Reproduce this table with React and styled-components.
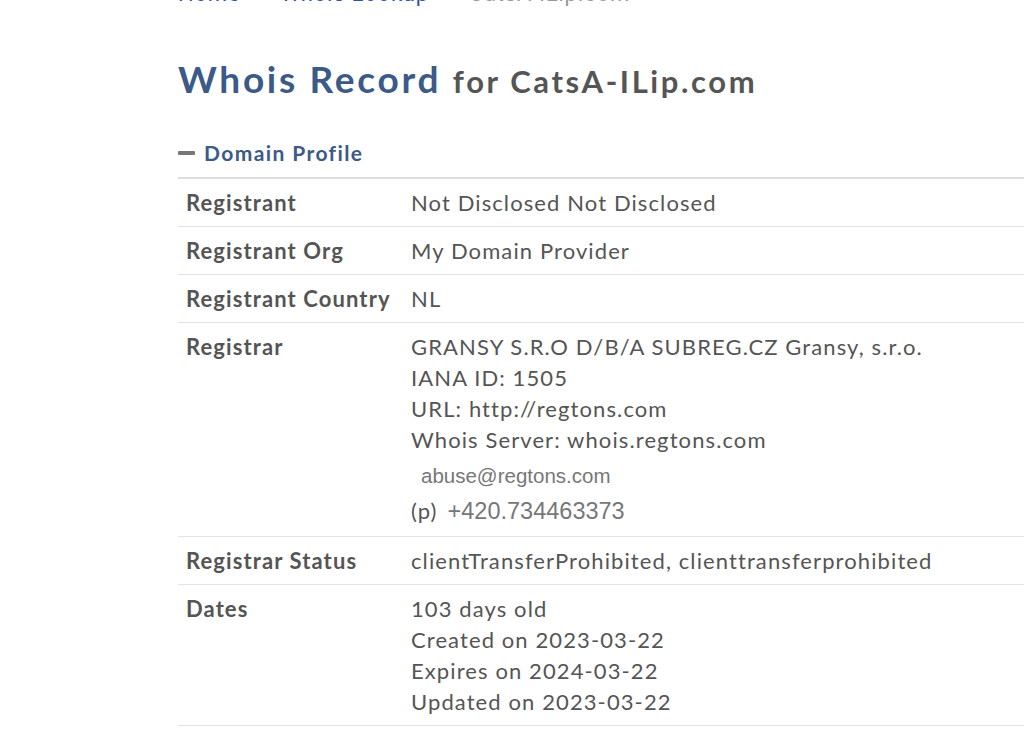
import styled, { createGlobalStyle } from "styled-components";

const GlobalStyle = createGlobalStyle`
  html, body {
    margin: 0;
    padding: 0;
    background: #fff;
    overflow: hidden;
  }
  body {
    font-family: Lato, "Open Sans", sans-serif;
    color: #555;
  }
`;

const rows = [
  { label: "Registrant", lines: ["Not Disclosed Not Disclosed"] },
  { label: "Registrant Org", lines: ["My Domain Provider"] },
  { label: "Registrant Country", lines: ["NL"] },
  {
    label: "Registrar",
    lines: [
      "GRANSY S.R.O D/B/A SUBREG.CZ Gransy, s.r.o.",
      "IANA ID: 1505",
      "URL: http://regtons.com",
      "Whois Server: whois.regtons.com",
    ],
    contact: { email: "abuse@regtons.com", phone: "+420.734463373" },
  },
  {
    label: "Registrar Status",
    lines: ["clientTransferProhibited, clienttransferprohibited"],
  },
  {
    label: "Dates",
    lines: [
      "103 days old",
      "Created on 2023-03-22",
      "Expires on 2024-03-22",
      "Updated on 2023-03-22",
    ],
  },
];

export default function App() {
  return (
    <Page>
      <GlobalStyle />
      <Crumbs>
        <CrumbLink>Home</CrumbLink>
        <Sep>»</Sep>
        <CrumbLink>Whois Lookup</CrumbLink>
        <Sep>»</Sep>
        <CrumbCurrent>CatsA-ILip.com</CrumbCurrent>
      </Crumbs>
      <Title>
        Whois Record <small>for CatsA-ILip.com</small>
      </Title>
      <SectionToggle>
        <Minus />
        Domain Profile
      </SectionToggle>
      <Table>
        <tbody>
          {rows.map((row) => (
            <Row key={row.label}>
              <Label>{row.label}</Label>
              <Value>
                {row.lines.map((l) => (
                  <div key={l}>{l}</div>
                ))}
                {row.contact && (
                  <>
                    <Email>{row.contact.email}</Email>
                    <PhoneLine>
                      (p)<Phone>{row.contact.phone}</Phone>
                    </PhoneLine>
                  </>
                )}
              </Value>
            </Row>
          ))}
        </tbody>
      </Table>
    </Page>
  );
}

const Page = styled.div`
  padding-left: 178px;
  width: 900px;
`;

const Crumbs = styled.div`
  display: flex;
  align-items: baseline;
  gap: 14px;
  margin-top: -20px;
  font-family: Roboto, "Liberation Sans", sans-serif;
  font-size: 22px;
  line-height: 28px;
  letter-spacing: 0.8px;
`;

const CrumbLink = styled.span`
  color: #2f4fa8;
`;

const Sep = styled.span`
  color: #999;
  font-size: 14px;
  width: 12px;
  text-align: center;
`;

const CrumbCurrent = styled.span`
  color: #999;
`;

const Title = styled.h1`
  margin: 46px 0 0;
  font-size: 37px;
  line-height: 46px;
  font-weight: 700;
  letter-spacing: 2.7px;
  color: #3c5a87;
  small {
    font-size: 31px;
    letter-spacing: 2.6px;
    color: #555;
    font-weight: 700;
  }
`;

const SectionToggle = styled.div`
  display: flex;
  align-items: center;
  gap: 9px;
  margin-top: 35px;
  font-size: 21px;
  line-height: 28px;
  font-weight: 700;
  letter-spacing: 1.4px;
  color: #3c5a87;
`;

const Minus = styled.span`
  display: inline-block;
  width: 17px;
  height: 4px;
  border-radius: 1px;
  background: #777;
  margin-top: -1px;
`;

const Table = styled.table`
  margin-top: 10px;
  width: 100%;
  border-collapse: collapse;
  border-top: 2px solid #ddd;
  font-size: 22px;
  line-height: 31px;
  letter-spacing: 1.1px;
`;

const Row = styled.tr`
  border-bottom: 1px solid #e2e2e2;
`;

const Label = styled.td`
  width: 209px;
  padding: 8px;
  vertical-align: top;
  font-weight: 700;
  color: #555;
  white-space: nowrap;
`;

const Value = styled.td`
  padding: 8px;
  vertical-align: top;
  color: #555;
`;

const Email = styled.div`
  font-family: "Liberation Sans", Arial, sans-serif;
  font-size: 20.5px;
  letter-spacing: 0;
  line-height: 36px;
  margin-top: 3px;
  color: #777;
  padding-left: 10px;
`;

const PhoneLine = styled.div`
  line-height: 33px;
`;

const Phone = styled.span`
  font-family: "Liberation Sans", Arial, sans-serif;
  font-size: 23.5px;
  letter-spacing: 0;
  color: #777;
  margin-left: 10px;
`;
